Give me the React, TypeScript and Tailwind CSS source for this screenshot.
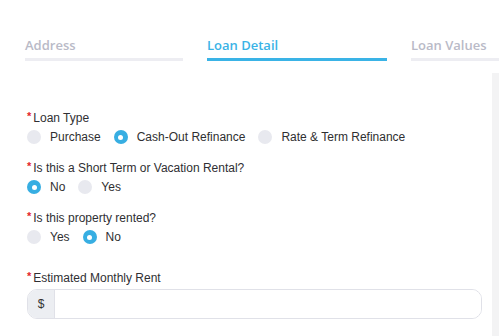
import React from "react";

type Option = { label: string; checked?: boolean };

const tabs = [
	{ title: "Address", width: "w-[158px]", active: false },
	{ title: "Loan Detail", width: "w-[180px]", active: true },
	{ title: "Loan Values", width: "w-[120px]", active: false },
];

const Radio = ({ label, checked }: Option) => (
	<div className="flex items-center gap-[9px]">
		{checked ? (
			<span className="flex h-[14px] w-[14px] items-center justify-center rounded-full bg-[#37aee2]">
				<span className="h-[5px] w-[5px] rounded-full bg-white" />
			</span>
		) : (
			<span className="h-[14px] w-[14px] rounded-full bg-[#e8e9ef]" />
		)}
		<span className="text-[12px] leading-[16px] text-[#2f2f31]">{label}</span>
	</div>
);

const Label = ({ text }: { text: string }) => (
	<div className="flex items-start text-[12px] leading-[14px] text-[#2f2f33]">
		<span className="mr-[2px] text-[11px] font-bold leading-[10px] text-[#e3262a]">*</span>
		{text}
	</div>
);

const RadioGroup = ({ label, options }: { label: string; options: Option[] }) => (
	<div className="flex flex-col gap-[4px]">
		<Label text={label} />
		<div className="flex items-center gap-[13px]">
			{options.map((o) => (
				<Radio key={o.label} {...o} />
			))}
		</div>
	</div>
);

export default function App() {
	return (
		<div className="flex h-[336px] w-[499px] flex-col overflow-hidden bg-white font-['Liberation_Sans',Arial,sans-serif]">
			<div className="flex gap-6 pl-[25px] pt-[36px]">
				{tabs.map((t) => (
					<div key={t.title} className={`${t.width} shrink-0`}>
						<div
							className={`font-['Open_Sans',sans-serif] text-[13px] font-semibold leading-[18px] ${
								t.active ? "text-[#3ab3e6]" : "text-[#b9bac7]"
							}`}
						>
							{t.title}
						</div>
						<div
							className={`mt-[4px] ${
								t.active ? "h-[3px] bg-[#3ab3e6]" : "h-[3px] bg-[#ededf2]"
							}`}
						/>
					</div>
				))}
			</div>

			<div className="mt-[12px] flex flex-1">
				<div className="flex flex-1 flex-col pl-[27px] pr-[10px] pt-[38px]">
					<div className="flex flex-col gap-[16px]">
						<RadioGroup
							label="Loan Type"
							options={[
								{ label: "Purchase" },
								{ label: "Cash-Out Refinance", checked: true },
								{ label: "Rate & Term Refinance" },
							]}
						/>
						<RadioGroup
							label="Is this a Short Term or Vacation Rental?"
							options={[{ label: "No", checked: true }, { label: "Yes" }]}
						/>
						<RadioGroup
							label="Is this property rented?"
							options={[{ label: "Yes" }, { label: "No", checked: true }]}
						/>
					</div>

					<div className="mt-[26px] flex flex-col gap-[4px]">
						<Label text="Estimated Monthly Rent" />
						<div className="flex h-[30px] overflow-hidden rounded-[10px] border border-[#e0e1e8]">
							<span className="flex w-[26px] items-center justify-center bg-[#eceef2] text-[12px] text-[#333]">
								$
							</span>
							<input className="flex-1 border-l border-[#e0e1e8] bg-white outline-none" />
						</div>
					</div>
				</div>
				<div className="w-[7px] bg-[#f3f3f4]" />
			</div>
		</div>
	);
}
